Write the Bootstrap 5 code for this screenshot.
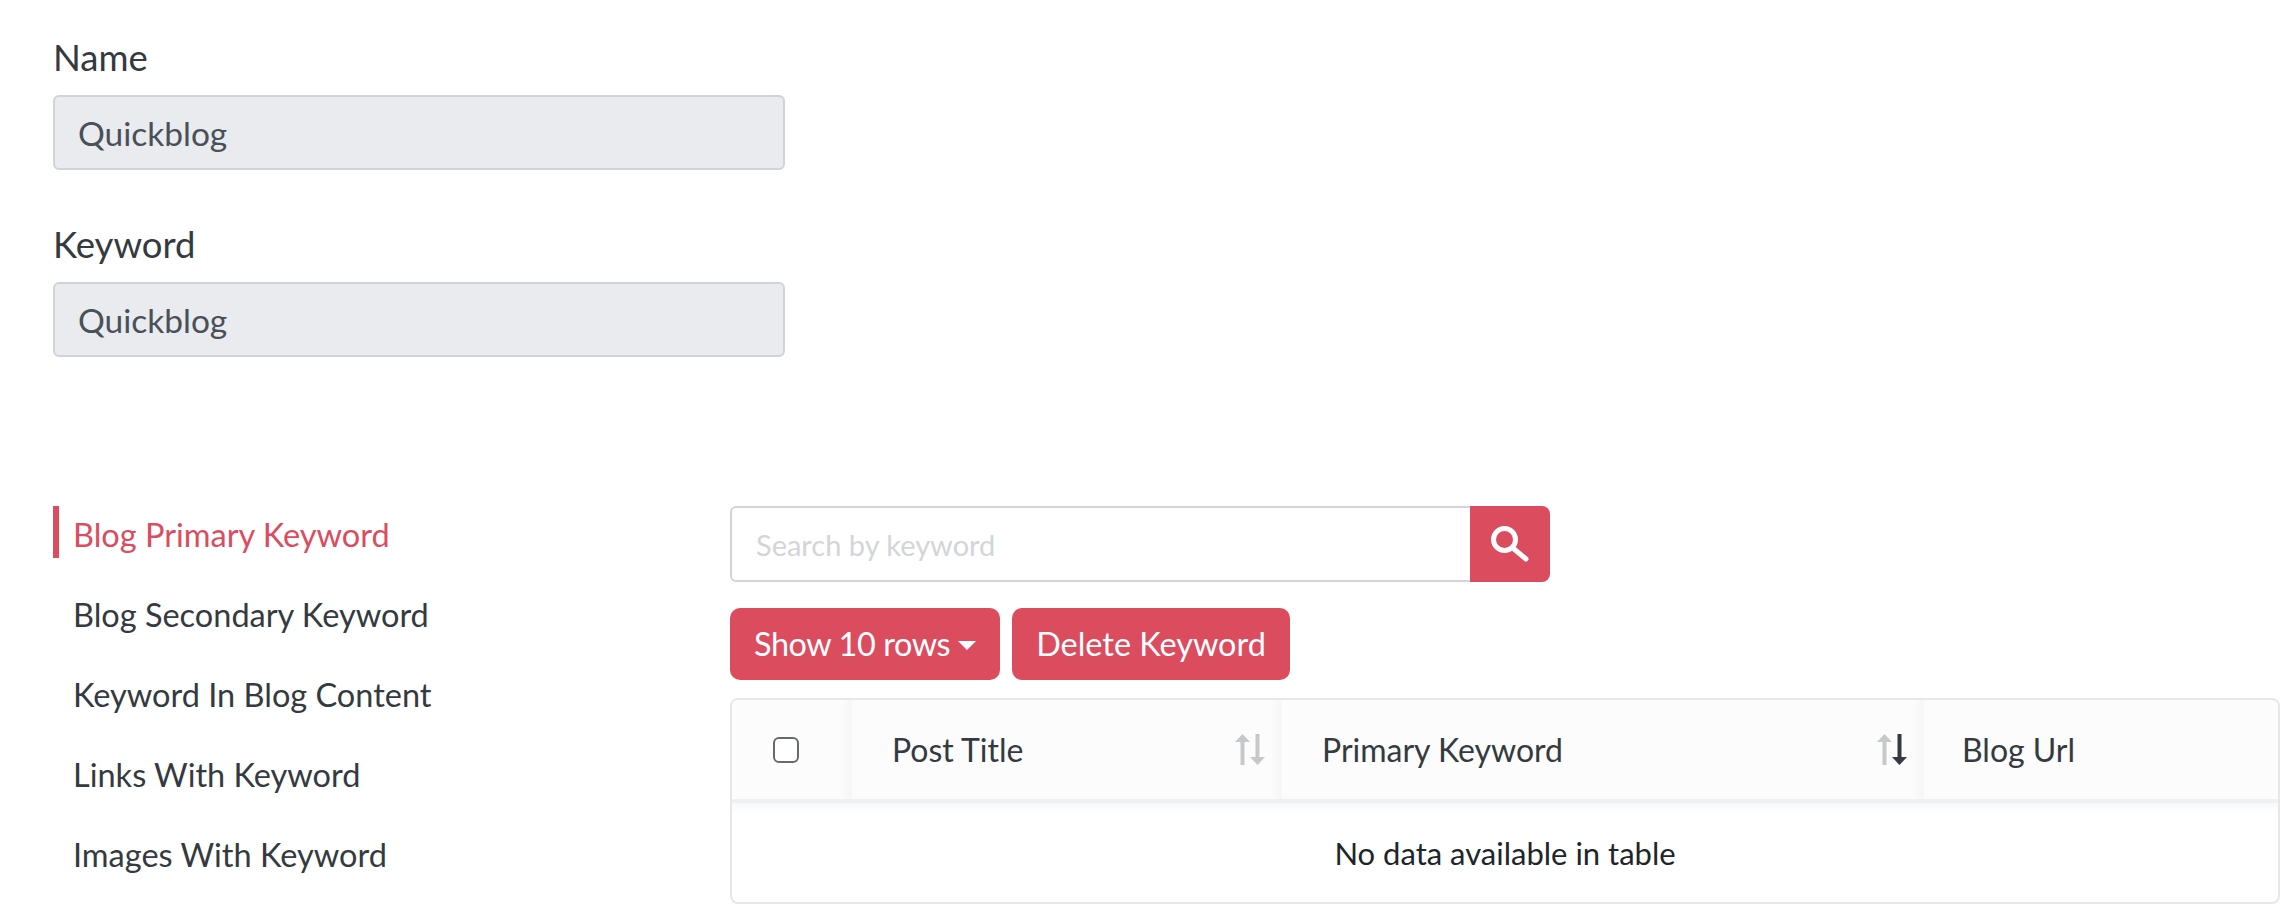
<!DOCTYPE html>
<html lang="en">
<head>
<meta charset="utf-8">
<title>Keyword</title>
<link href="https://cdn.jsdelivr.net/npm/bootstrap@5.3.0/dist/css/bootstrap.min.css" rel="stylesheet">
<style>
html,body{height:100%}
body{font-family:"Lato","Liberation Sans",sans-serif;font-size:32.5px;color:#343a40;background:#fff;padding:0 14px 0 53px;line-height:1.5;overflow:hidden}
.fld-wrap{width:732px}
.fld-label{display:block;font-size:36.5px;line-height:40px;margin:0 0 18px;color:#343a40}
.fld-input.form-control{height:75px;font-size:33.5px;line-height:71px;padding:0 23px;background:#e9ebef;border:2px solid #ced4da;border-radius:6px;color:#495057}
.fld-group{margin-bottom:54px}
.fld-group:first-child{padding-top:37px}
.kw-layout{margin-top:149px}
.kw-side{width:677px;flex:none}
.kw-link{display:block;height:52px;line-height:57px;margin-bottom:28px;padding-left:14px;border-left:6px solid transparent;color:#343a40;text-decoration:none}
.kw-link.on{color:#dc4c5f;border-left-color:#dc4c5f}
.kw-main{flex:1;min-width:0}
.kw-search{width:820px;height:76px}
.kw-search .form-control{height:76px;font-size:29px;padding:0 24px;border:2px solid #d4d4d4;border-radius:6px 0 0 6px;border-right:0}
.kw-search .form-control::placeholder{color:#d3d5d8}
.kw-search .btn-go{width:80px;flex:none;background:#dc4c5f;border:0;border-radius:0 8px 8px 0;display:flex;align-items:center;justify-content:center;padding:0}
.kw-btn{height:72px;background:#dc4c5f;color:#fff;border:0;border-radius:10px;font-size:32.4px;padding:0 24px;line-height:72px}
.kw-btn.dropdown-toggle{letter-spacing:-.4px}
.kw-btn.dropdown-toggle::after{border-top-width:9px;border-left-width:9px;border-right-width:9px;margin-left:8px;vertical-align:6px}
.kw-btnrow{margin-top:26px;gap:12px}
.kw-tablebox{margin-top:18px;border:2px solid #e6e7e8;border-radius:8px;height:206px;overflow:hidden}
.kw-table{width:100%;table-layout:fixed;margin:0;border-collapse:separate;border-spacing:0}
.kw-table th{height:103px;background:#fcfcfc;font-weight:400;font-size:32px;padding:0;border-bottom:4px solid #eff0f1;color:#343a40;vertical-align:middle;position:relative;box-shadow:inset -12px 0 8px -8px #f5f5f5}
.kw-table th:first-child{width:120px;padding-left:41px}
.kw-table th.c2{width:430px;padding-left:40px}
.kw-table th.c3{width:642px;padding-left:40px}
.kw-table th.c4{padding-left:38px;box-shadow:none}
.kw-table td{height:100px;text-align:center;font-size:31px;color:#212529;padding:0;border:0;box-shadow:inset 0 14px 10px -10px #f7f7f7;vertical-align:middle}
.kw-check.form-check-input{display:block;width:26px;height:26px;margin:0;border:2px solid #666a6f;border-radius:6px;float:none}
.kw-sort{position:absolute;right:17px;top:34px;width:30px;height:31px}
</style>
</head>
<body>
<div class="fld-wrap">
  <div class="fld-group">
    <label class="fld-label">Name</label>
    <input class="form-control fld-input" value="Quickblog" disabled>
  </div>
  <div class="fld-group">
    <label class="fld-label">Keyword</label>
    <input class="form-control fld-input" value="Quickblog" disabled>
  </div>
</div>
<div class="d-flex kw-layout">
  <nav class="kw-side">
    <a class="kw-link on" href="#">Blog Primary Keyword</a>
    <a class="kw-link" href="#">Blog Secondary Keyword</a>
    <a class="kw-link" href="#">Keyword In Blog Content</a>
    <a class="kw-link" href="#">Links With Keyword</a>
    <a class="kw-link" href="#">Images With Keyword</a>
  </nav>
  <div class="kw-main">
    <div class="d-flex kw-search">
      <input class="form-control" placeholder="Search by keyword">
      <button class="btn-go" type="button" aria-label="Search">
        <svg width="38" height="36" viewBox="0 0 38 36" fill="none" stroke="#fff"><circle cx="13.500" cy="13.500" r="11" stroke-width="5"/><path d="M23 23l12 10" stroke-width="5" stroke-linecap="round"/></svg>
      </button>
    </div>
    <div class="d-flex kw-btnrow">
      <button class="btn kw-btn dropdown-toggle" type="button">Show 10 rows</button>
      <button class="btn kw-btn" type="button">Delete Keyword</button>
    </div>
    <div class="kw-tablebox">
      <table class="kw-table">
        <thead>
          <tr>
            <th><input class="form-check-input kw-check" type="checkbox" aria-label="Select all"></th>
            <th class="c2">Post Title
              <svg class="kw-sort" viewBox="0 0 30 31"><path d="M7.500 0L15 8H9.500V31H5.500V8H0z" fill="#c6c8ca"/><path d="M22.500 31L15 23h5.500V0h4v23H30z" fill="#c6c8ca"/></svg>
            </th>
            <th class="c3">Primary Keyword
              <svg class="kw-sort" viewBox="0 0 30 31"><path d="M7.500 0L15 8H9.500V31H5.500V8H0z" fill="#c6c8ca"/><path d="M22.500 31L15 23h5.500V0h4v23H30z" fill="#343a40"/></svg>
            </th>
            <th class="c4">Blog Url</th>
          </tr>
        </thead>
        <tbody>
          <tr><td colspan="4">No data available in table</td></tr>
        </tbody>
      </table>
    </div>
  </div>
</div>
<script src="https://cdn.jsdelivr.net/npm/bootstrap@5.3.0/dist/js/bootstrap.bundle.min.js"></script>
</body>
</html>
